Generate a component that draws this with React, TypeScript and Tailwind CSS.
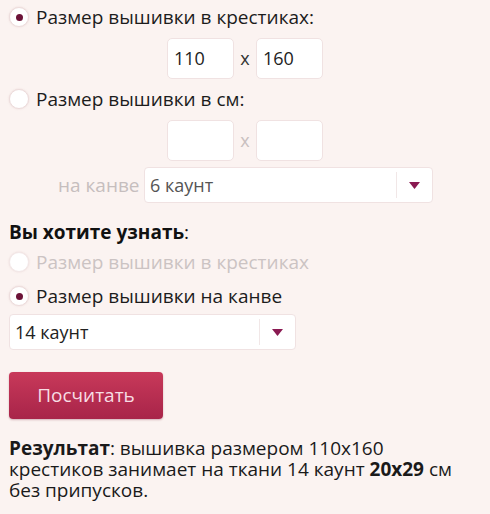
import React from "react";

function Radio({ checked = false, disabled = false }: { checked?: boolean; disabled?: boolean }) {
  return (
    <span
      className={`flex h-[20px] w-[20px] shrink-0 items-center justify-center rounded-full border bg-white shadow-[0_0_2px_rgba(200,160,160,0.35)] ${
        disabled ? "border-[#f3e8e8]" : "border-[#eddcdc]"
      }`}
    >
      {checked && <span className="h-[7px] w-[7px] rounded-full bg-[#6c1338]" />}
    </span>
  );
}

function RadioRow({ label, checked, disabled }: { label: string; checked?: boolean; disabled?: boolean }) {
  return (
    <div className="flex items-center gap-[7px] h-[20px]">
      <Radio checked={checked} disabled={disabled} />
      <span className={`text-[19px] leading-none ${disabled ? "text-[#cbc3c3]" : "text-[#1c1c1c]"}`}>{label}</span>
    </div>
  );
}

function SizeInput({ value }: { value?: string }) {
  return (
    <div className="flex h-[41px] w-[67px] items-center rounded-[5px] border border-[#f0e2e2] bg-white px-[6px] text-[18px] text-[#222]">
      {value}
    </div>
  );
}

function Select({ value, width, muted }: { value: string; width: string; muted?: boolean }) {
  return (
    <div className={`flex h-[36px] ${width} items-center rounded-[4px] border border-[#f0e2e2] bg-white`}>
      <span className={`flex-1 pl-[5px] text-[18px] ${muted ? "text-[#555]" : "text-[#222]"}`}>{value}</span>
      <span className="h-[26px] w-px bg-[#f1e7e7]" />
      <span className="flex w-[35px] justify-center">
        <svg width="11" height="7" viewBox="0 0 11 7">
          <path d="M0 0h11L5.5 7z" fill="#8a1a52" />
        </svg>
      </span>
    </div>
  );
}

export default function App() {
  return (
    <div className="h-[514px] w-[490px] overflow-hidden bg-[#fbf3f1] font-['Open_Sans',sans-serif]">
      <div className="flex flex-col px-[9px] pt-[7px]">
        <RadioRow label="Размер вышивки в крестиках:" checked />

        <div className="mt-[11px] flex items-center pl-[158px]">
          <SizeInput value="110" />
          <span className="w-[22px] text-center text-[18px] text-[#333]">x</span>
          <SizeInput value="160" />
        </div>

        <div className="mt-[10px]">
          <RadioRow label="Размер вышивки в см:" />
        </div>

        <div className="mt-[11px] flex items-center pl-[158px]">
          <SizeInput />
          <span className="w-[22px] text-center text-[18px] text-[#c9c0c0]">x</span>
          <SizeInput />
        </div>

        <div className="mt-[6px] flex items-center pl-[49px]">
          <span className="w-[86px] text-[19px] text-[#c6bebe]">на канве</span>
          <Select value="6 каунт" width="w-[289px]" muted />
        </div>

        <div className="mt-[20px] text-[19px] leading-none text-[#111]">
          <b className="font-bold">Вы хотите узнать</b>:
        </div>

        <div className="mt-[10px]">
          <RadioRow label="Размер вышивки в крестиках" disabled />
        </div>
        <div className="mt-[14px]">
          <RadioRow label="Размер вышивки на канве" checked />
        </div>

        <div className="mt-[8px]">
          <Select value="14 каунт" width="w-[287px]" />
        </div>

        <button className="mt-[22px] flex h-[47px] w-[154px] items-center justify-center rounded-[4px] bg-gradient-to-b from-[#c8395a] to-[#a82449] text-[19px] text-[#f7dde4] shadow-[0_1px_2px_rgba(120,20,50,0.3)]">
          Посчитать
        </button>

        <p className="mt-[19px] text-[19px] leading-[21px] text-[#1a1a1a]">
          <b className="font-bold">Результат</b>: вышивка размером 110x160
          <br />
          крестиков занимает на ткани 14 каунт <b className="font-bold">20x29</b> см
          <br />
          без припусков.
        </p>
      </div>
    </div>
  );
}
